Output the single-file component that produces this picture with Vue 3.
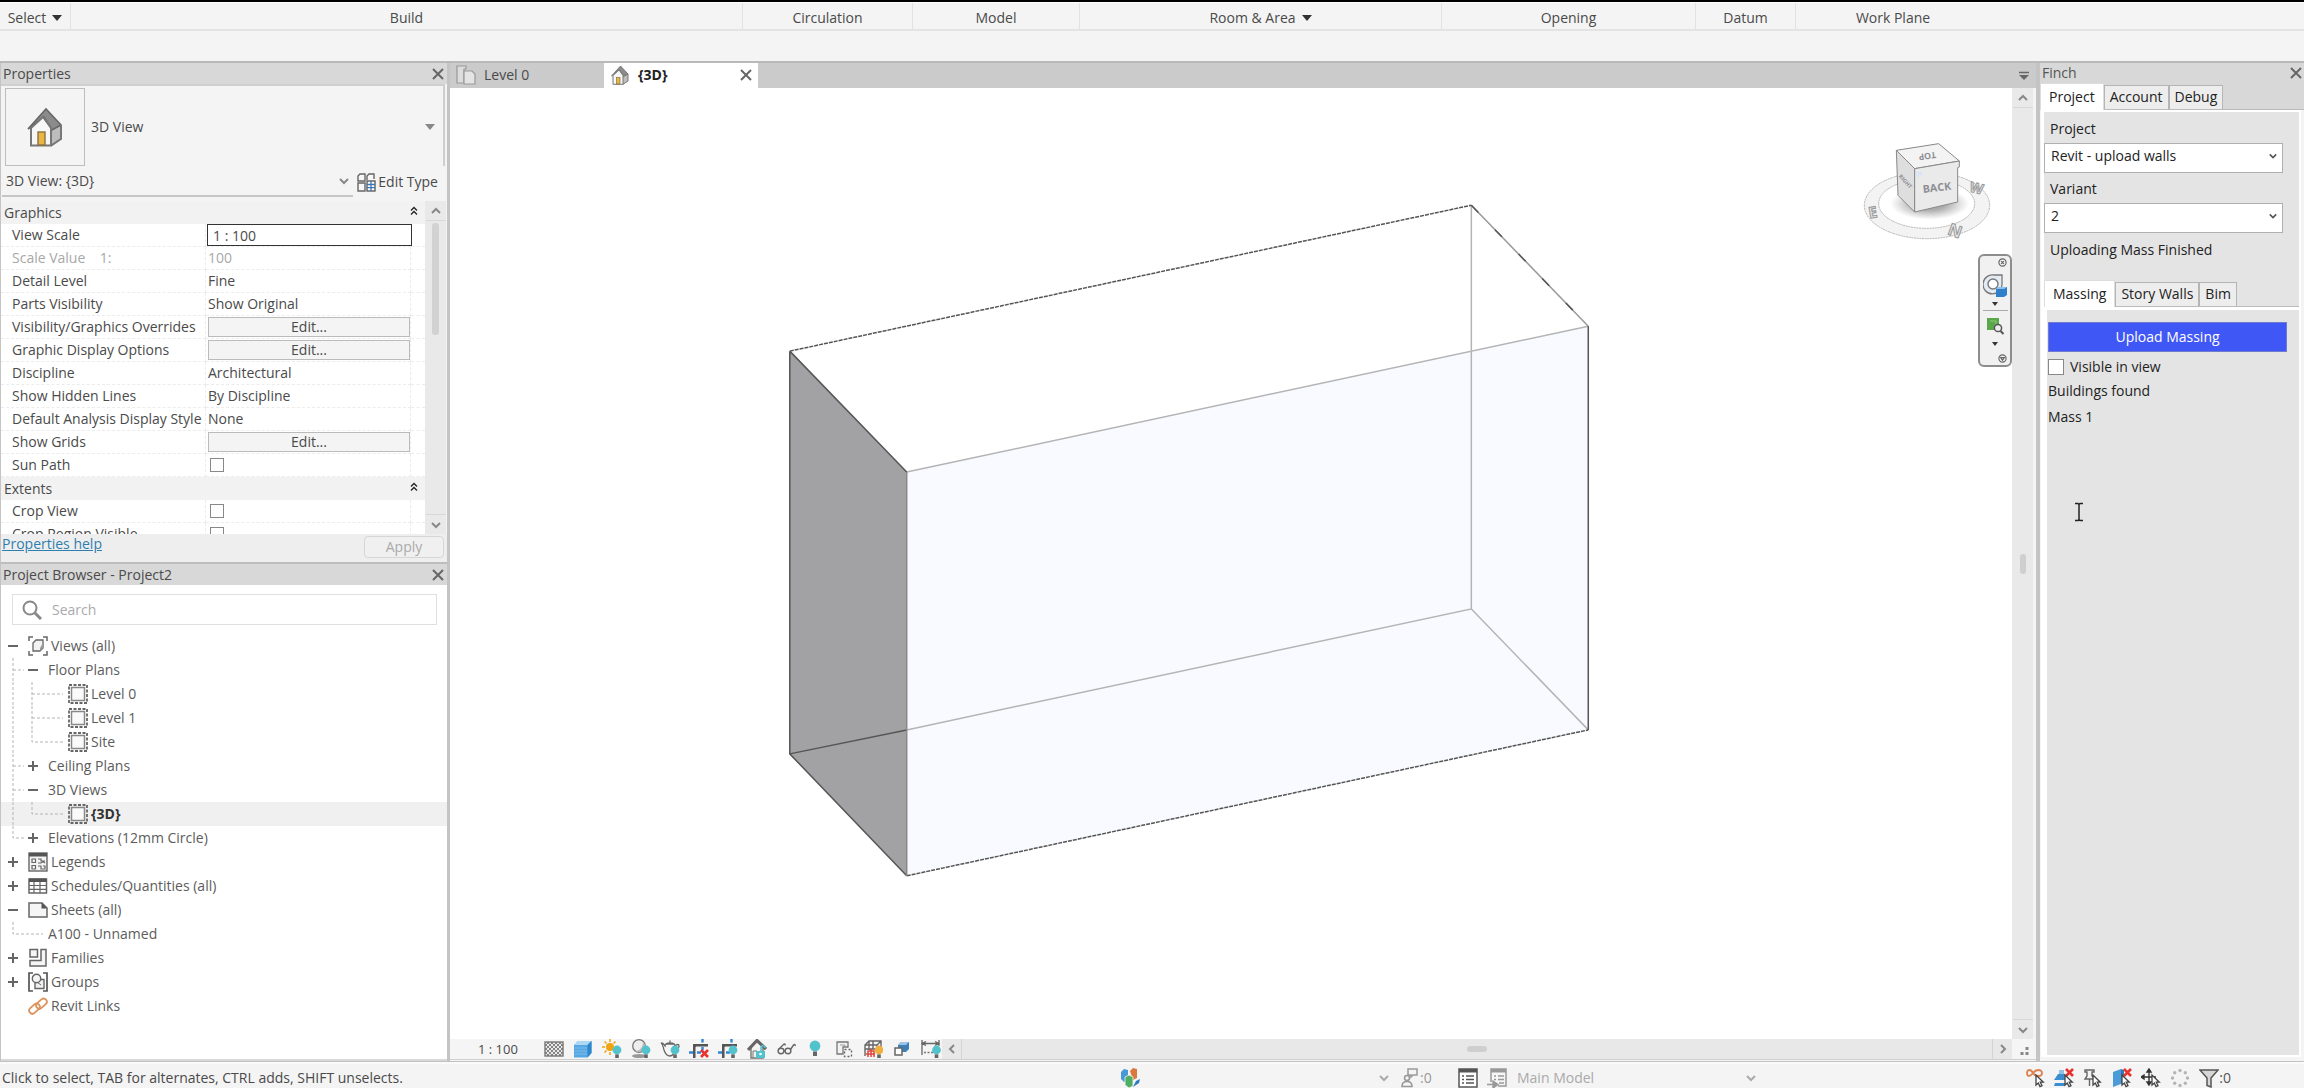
<script setup>
import { ref } from 'vue'

const ribbon = [
  { label: 'Select', w: 71, menu: true },
  { label: 'Build', w: 672 },
  { label: 'Circulation', w: 170 },
  { label: 'Model', w: 167 },
  { label: 'Room & Area', w: 362, menu: true },
  { label: 'Opening', w: 254 },
  { label: 'Datum', w: 100 },
  { label: 'Work Plane', w: 194 },
]

const groups = [
  {
    name: 'Graphics',
    rows: [
      { label: 'View Scale', value: '1 : 100', kind: 'input' },
      { label: 'Scale Value    1:', value: '100', kind: 'muted' },
      { label: 'Detail Level', value: 'Fine' },
      { label: 'Parts Visibility', value: 'Show Original' },
      { label: 'Visibility/Graphics Overrides', value: 'Edit...', kind: 'button' },
      { label: 'Graphic Display Options', value: 'Edit...', kind: 'button' },
      { label: 'Discipline', value: 'Architectural' },
      { label: 'Show Hidden Lines', value: 'By Discipline' },
      { label: 'Default Analysis Display Style', value: 'None' },
      { label: 'Show Grids', value: 'Edit...', kind: 'button' },
      { label: 'Sun Path', kind: 'check' },
    ],
  },
  {
    name: 'Extents',
    rows: [
      { label: 'Crop View', kind: 'check' },
      { label: 'Crop Region Visible', kind: 'check' },
    ],
  },
]

const leafMid = 'M12 0V24M31 0V24M31 12H62'
const tree = [
  { label: 'Views (all)', indent: 4, toggle: '-', icon: 'views' },
  { label: 'Floor Plans', indent: 24, toggle: '-', guides: 'M12 0V24M12 12H23' },
  { label: 'Level 0', indent: 67, icon: 'plan', guides: leafMid },
  { label: 'Level 1', indent: 67, icon: 'plan', guides: leafMid },
  { label: 'Site', indent: 67, icon: 'plan', guides: 'M12 0V24M31 0V12H62' },
  { label: 'Ceiling Plans', indent: 24, toggle: '+', guides: 'M12 0V24M12 12H23' },
  { label: '3D Views', indent: 24, toggle: '-', guides: 'M12 0V24M12 12H23' },
  { label: '{3D}', indent: 67, icon: 'plan', guides: 'M12 0V24M31 0V12H62', active: true },
  { label: 'Elevations (12mm Circle)', indent: 24, toggle: '+', guides: 'M12 0V12H23' },
  { label: 'Legends', indent: 4, toggle: '+', icon: 'legend' },
  { label: 'Schedules/Quantities (all)', indent: 4, toggle: '+', icon: 'schedule' },
  { label: 'Sheets (all)', indent: 4, toggle: '-', icon: 'sheet' },
  { label: 'A100 - Unnamed', indent: 40, guides: 'M12 0V12H42' },
  { label: 'Families', indent: 4, toggle: '+', icon: 'family' },
  { label: 'Groups', indent: 4, toggle: '+', icon: 'group' },
  { label: 'Revit Links', indent: 4, toggle: ' ', icon: 'link' },
]

const bulb = (c, x = 15, y = 11) =>
  `<circle cx="${x}" cy="${y}" r="4.4" fill="${c}"/><rect x="${x - 1.8}" y="${y + 4.4}" width="3.6" height="3.6" fill="#666"/>`
const teal = '#52c3cd'
const redX = (x, y, s = 7) =>
  `<path d="M${x} ${y}l${s} ${s}m0 ${-s}l${-s} ${s}" stroke="#e8322c" stroke-width="2.6" fill="none"/>`
const arrow = (x, y) =>
  `<path d="M${x} ${y}v10l2.300-2 1.700 3.600 2-1-1.700-3.400h3z" fill="#fff" stroke="#444" stroke-width="1.300"/>`
const cropCorner =
  '<path d="M5.500 19V6.500H19" fill="none" stroke="#555" stroke-width="3"/><path d="M7 19V8H19" fill="none" stroke="#eee" stroke-width="1"/><path d="M13.500 0v3.500M0 13.500h4M13.500 8v3.500M8 13.500h4" stroke="#2f86d6" stroke-width="2.400"/>'
const house =
  '<path d="M3 10.500 10 2l8 7v8l-6 2.500H3z" fill="#fff"/><path d="M13 10l5-2v8l-5 3.500z" fill="#bdbdbd"/><path d="M1.500 11 10.500 1l7.500 8-4.500 2.500L9.500 5z" fill="#8b8b8b" stroke="#666" stroke-width=".8"/><path d="M3 10.500V19.300h10V10.500L9 5z" fill="#f7f7f7" stroke="#777"/><path d="M13 19.300l5-3.300V9" fill="none" stroke="#777"/><rect x="6.500" y="12.500" width="3.500" height="6.500" fill="#e9b544" stroke="#8a7340" stroke-width=".7"/>'

const icons = {
  house,
  views:
    '<path d="M1 5V1h4M15 1h4v4M19 15v4h-4M5 19H1v-4" fill="none" stroke="#666" stroke-width="1.500"/><path d="M5 7l3-3h7v8l-3 3H5z" fill="#f2f2f2" stroke="#666" stroke-width="1.300"/><path d="M12 12l3-5v5l-3 3z" fill="#999"/>',
  plan:
    '<rect x="1" y="1" width="18" height="18" fill="none" stroke="#666" stroke-width="1.800" stroke-dasharray="3 1.500"/><rect x="3.500" y="3.500" width="13" height="13" fill="#fafafa" stroke="#888" stroke-width="1.500"/>',
  legend:
    '<rect x="1" y="1" width="18" height="18" fill="#f3f3f3" stroke="#666" stroke-width="1.400"/><rect x="1" y="1" width="18" height="3.500" fill="#555"/><path d="M4 7h3.500v3.500H4zM4 13.500h3.500V17H4zM10 7h3v2h4M10 11h3l2-1.500 2 1.500M10 14h3v3h4v-3h-2" fill="none" stroke="#666" stroke-width="1.200"/>',
  schedule:
    '<rect x="1" y="3" width="17.500" height="14" fill="#fff" stroke="#666" stroke-width="1.500"/><rect x="1" y="2.500" width="17.500" height="3.500" fill="#555"/><path d="M1 9.500h17.500M1 13.300h17.500M6 6v11M12 6v11" stroke="#666" stroke-width="1.200"/>',
  sheet:
    '<path d="M1 3h13l5 5v9H1z" fill="#f5f5f5" stroke="#666" stroke-width="1.500"/><path d="M13.500 2.500v6H19z" fill="#555"/>',
  family:
    '<path d="M2 1.500h7.500V9H2zM13 1.500h5V18H2v-5.500h11z" fill="#f5f5f5" stroke="#666" stroke-width="1.500"/>',
  group:
    '<path d="M5 1H1v18h4M15 1h4v18h-4" fill="none" stroke="#555" stroke-width="1.700"/><path d="M7 10v6.500h9V7.500h-3" fill="#f1f1f1" stroke="#666" stroke-width="1.400"/><circle cx="8.500" cy="6.500" r="4.200" fill="#f5f5f5" stroke="#666" stroke-width="1.400"/><path d="M9 10l4 3" stroke="#666"/>',
  link:
    '<g fill="none" stroke="#dd935c" stroke-width="1.800"><rect x="7.500" y="4.500" width="12" height="6.400" rx="3.200" transform="rotate(-42 13.500 7.700)"/><rect x=".5" y="9.500" width="12" height="6.400" rx="3.200" transform="rotate(-42 6.500 12.700)"/></g>',
  hatch:
    '<rect x="1" y="3" width="18" height="14" fill="#e9e9e9" stroke="#777" stroke-width="1.400"/><path d="M1 7l4-4M1 11l8-8M1 15l12-12M3 17L17 3M7 17L19 5M11 17l8-8M15 17l4-4M5 17L1 13M9 17L1 9M13 17L1 5M17 17L3 3M19 15L7 3M19 11l-8-8M19 7l-4-4" stroke="#777" stroke-width=".9"/>',
  shaded:
    '<path d="M1 6l4-4h13.500v12l-4 4.500H1z" fill="#56a7e2"/><path d="M1 6l4-4h13.500l-4 4z" fill="#aed7f4"/><path d="M14.500 6l4-4v12l-4 4.500z" fill="#2e86c9"/><path d="M2 9h12M2 12h12M2 15h12" stroke="#7dbdeb"/>',
  sun:
    '<circle cx="8" cy="8" r="4" fill="#f0a30e"/><path d="M8 0v3M8 13v3M0 8h3M13 8h3M2.500 2.500l2 2M2.500 13.500l2-2M13.500 2.500l-2 2" stroke="#f0a30e" stroke-width="1.500"/>' + bulb(teal),
  shadow:
    '<ellipse cx="8" cy="17" rx="7" ry="2" fill="#999"/><circle cx="8" cy="7" r="6.300" fill="#eee" stroke="#777" stroke-width="1.300"/><path d="M12 2.500a6.300 6.300 0 0 1-8 9.500c5 0 8-4 8-9.500z" fill="#bbb"/>' + bulb(teal),
  teapot:
    '<path d="M1 4c3 0 3 2 4 3 0-2 2-3 5-3s5 1 5 3c2-2 4-2 4 0s-2 3-4 3c-1 5-2 7-5 7s-5-3-6-6C3 8 3 5 1 4zM6 5h8M10 1.500v2" fill="#f5f5f5" stroke="#666" stroke-width="1.300"/>' + bulb(teal),
  cropOff: cropCorner + redX(12, 11),
  cropOn: cropCorner + bulb(teal),
  lock:
    '<path d="M4 9v10h12V9" fill="#f2f2f2" stroke="#777" stroke-width="1.400"/><path d="M1 11L10 1.500 19 10" fill="none" stroke="#666" stroke-width="3.200"/><path d="M6 19v-7h4v7" fill="none" stroke="#777"/><rect x="9" y="12" width="9" height="7" fill="#52c3cd"/><path d="M14 12V9c0-3 4-3 4 0" fill="none" stroke="#52c3cd" stroke-width="1.600"/><circle cx="13.500" cy="15" r="1.300" fill="#fff"/>',
  glasses:
    '<g fill="none" stroke="#666" stroke-width="1.400"><ellipse cx="5" cy="12" rx="2.900" ry="2.700"/><ellipse cx="12" cy="12" rx="2.900" ry="2.700"/><path d="M3 10L7.500 5.500c1-1 2-.5 1.500 1M14.500 10.500l3-4.500c1-1 2-.5 1.500 1M8 12h1"/></g>',
  bulb:
    '<circle cx="10" cy="7" r="5.400" fill="#52c3cd"/><rect x="8" y="12.500" width="4" height="4.500" fill="#666"/>',
  reveal:
    '<path d="M3 3h11v5h-5v7H3z" fill="#f2f2f2" stroke="#777" stroke-width="1.300"/><path d="M6 6h5v3" fill="none" stroke="#999"/><path d="M10.500 10.500h7v7h-7z" fill="none" stroke="#666" stroke-width="1.400" stroke-dasharray="2 2"/>',
  analytical:
    '<path d="M2 17V6l4-4h12v7M2 6h12v5M14 6l4-4M6 2v9M10 2v8M2 10h16" fill="none" stroke="#666" stroke-width="1.400"/><path d="M5 18v-6h6v6M3 15h9M8 10v8" fill="none" stroke="#e0453c" stroke-width="1.500"/>' + bulb('#f0b040', 16, 11),
  displace:
    '<path d="M6 6l3-3h8v7l-3 3H6z" fill="#3f7fb8"/><path d="M6 6l3-3h8l-3 3z" fill="#9cc4e4"/><path d="M3 9h7v7H3z" fill="#fff" stroke="#666" stroke-width="1.500"/>',
  constraint:
    '<path d="M1 1v15M18 1v6M1 4.500h17M5 2.500l-4 2 4 2M14 2.500l4 2-4 2" fill="none" stroke="#666" stroke-width="1.300"/><path d="M3 13.500h9" stroke="#777" stroke-width="1.400" stroke-dasharray="2 1.500"/>' + bulb(teal, 15.500, 11),
  selLink:
    '<path d="M2 5c0-4 4-4 6 0s9 4 9 0-6-4-9 0-6 4-6 0z" fill="none" stroke="#dd8350" stroke-width="1.800"/>' + arrow(11, 7),
  selUnder:
    '<path d="M0 12l4-6h7v6zM1 15h10v3H0z" fill="#3b8fcf"/><path d="M5 2h5v4H5z" fill="#8fc1e6"/>' + redX(12, 1) + arrow(11, 7),
  selPin:
    '<path d="M2 2h9v2H9v4l3 3H2l2-3V4H2zM6.500 11v7" fill="#f3f3f3" stroke="#666" stroke-width="1.400"/>' + arrow(10, 7),
  selFace:
    '<path d="M1 4l8-3v15l-8 3z" fill="#4a9bd8"/><path d="M9 1l3 1v12l-3 2z" fill="#2e7ab4"/>' + redX(12, 1) + arrow(10, 7),
  selDrag:
    '<path d="M8 2v14M1 9h14M8 1L6 4h4zM8 17l-2-3h4zM0 9l3-2v4z" fill="#333" stroke="#333" stroke-width="1.400"/>' + arrow(11, 7),
  busy:
    '<g fill="#b5b5b5"><circle cx="10" cy="2.500" r="1.700"/><circle cx="10" cy="17.500" r="1.700"/><circle cx="2.500" cy="10" r="1.700"/><circle cx="17.500" cy="10" r="1.700"/><circle cx="4.700" cy="4.700" r="1.700"/><circle cx="15.300" cy="4.700" r="1.700"/><circle cx="4.700" cy="15.300" r="1.700"/><circle cx="15.300" cy="15.300" r="1.700"/></g>',
  filter:
    '<path d="M1 2h18l-7 8v9l-4-1.500V10z" fill="#d6d6d6" stroke="#555" stroke-width="1.500"/>',
  sharing:
    '<path d="M1 4l3-3 4 1v11l-4 1-3-3z" fill="#4a98d6"/><path d="M10 3l3-3 4 1v9l-4 2z" fill="#d9793e"/><path d="M5 9l4-2 4 2v9l-4 2-4-3z" fill="#4fae62" stroke="#f4f4f4" stroke-width=".8"/><path d="M13 19l3-6 4-2-1 4-3 2z" fill="#2f78c4"/>',
  request:
    '<path d="M8 1h9v6h-4l-2 2V7H8z" fill="#f4f4f4" stroke="#999" stroke-width="1.500"/><circle cx="7" cy="10" r="2.500" fill="#f4f4f4" stroke="#999" stroke-width="1.500"/><path d="M2 18.500c0-4 2-5 5-5s5 1 5 5z" fill="#f4f4f4" stroke="#999" stroke-width="1.600"/>',
  options:
    '<rect x="1" y="1" width="18" height="18" fill="#fff" stroke="#555" stroke-width="1.500"/><rect x="1" y="1" width="18" height="3.500" fill="#555"/><path d="M4 8h2M8 8h8M4 11.500h2M8 11.500h8M4 15h2M8 15h8" stroke="#555" stroke-width="1.400"/>',
  optionPick:
    '<path d="M4 14V1h15v17h-8" fill="#f6f6f6" stroke="#999" stroke-width="1.500"/><rect x="4" y="1" width="15" height="3.500" fill="#999"/><path d="M7 8h2M11 8h6M7 11.500h2M11 11.500h6M12 15h5M0 16.500h6M6 13l5 3.500L6 20z" stroke="#999" stroke-width="1.400" fill="#999"/>',
  editType:
    '<path d="M2 9V4l2-2h5v7zM11 8V4l2-2h5v5" fill="#f7f7f7" stroke="#666" stroke-width="1.400"/><path d="M2 11h7v8H2z" fill="#f7f7f7" stroke="#666" stroke-width="1.400"/><rect x="11" y="9" width="8" height="10" fill="#fff" stroke="#555" stroke-width="1.300"/><path d="M11 12.500h8M11 15.700h8M15 9v10" stroke="#3b76b8" stroke-width="1.300"/>',
  pages:
    '<path d="M1 1h9v3h-2v14H1z" fill="#dcdcdc" stroke="#999" stroke-width="1.200"/><path d="M8 6h8l3 3v10H8z" fill="#e4e4e4" stroke="#999" stroke-width="1.200"/>',
}

const viewTools = ['hatch', 'shaded', 'sun', 'shadow', 'teapot', 'cropOff', 'cropOn', 'lock', 'glasses', 'bulb', 'reveal', 'analytical', 'displace', 'constraint']
const selTools = ['selLink', 'selUnder', 'selPin', 'selFace', 'selDrag', 'busy']

const project = ref('Revit - upload walls')
const variant = ref('2')
</script>

<template>
  <div class="app">
    <header class="ribbon">
      <div v-for="r in ribbon" :key="r.label" class="panel-label" :style="{ flexBasis: r.w + 'px' }">
        <button v-if="r.menu" type="button" class="plain">{{ r.label }} <span class="caret"></span></button>
        <span v-else>{{ r.label }}</span>
      </div>
    </header>
    <div class="options-bar"></div>

    <main class="work">
      <aside class="left">
        <section class="dock">
          <div class="titlebar">
            <h2>Properties</h2>
            <button type="button" class="close" aria-label="Close properties"><svg viewBox="0 0 12 12"><path d="M1 1l10 10M11 1L1 11" /></svg></button>
          </div>
          <div class="type-picker">
            <div class="thumb"><svg viewBox="0 0 20 20" v-html="icons.house"></svg></div>
            <span class="type-name">3D View</span>
            <span class="caret grey"></span>
          </div>
          <div class="instance">
            <button type="button" class="instance-select">3D View: {3D}<svg class="chev" viewBox="0 0 10 10"><path d="M1 3l4 4 4-4" /></svg></button>
            <button type="button" class="plain edit-type"><svg class="ico" viewBox="0 0 20 20" v-html="icons.editType"></svg>Edit Type</button>
          </div>
          <div class="grid-wrap">
            <div class="grid-clip">
              <table>
                <colgroup><col class="c-name" /><col /><col class="c-end" /></colgroup>
                <tbody v-for="g in groups" :key="g.name">
                  <tr class="group">
                    <th colspan="2" scope="colgroup">{{ g.name }}</th>
                    <td><svg class="fold" viewBox="0 0 8 10"><path d="M1 4.500l3-3 3 3M1 8.500l3-3 3 3" /></svg></td>
                  </tr>
                  <tr v-for="(r, i) in g.rows" :key="r.label" :class="{ muted: r.kind === 'muted' }">
                    <th scope="row"><label :for="g.name + i">{{ r.label }}</label></th>
                    <td class="val">
                      <input v-if="r.kind === 'input'" :id="g.name + i" type="text" :value="r.value" />
                      <button v-else-if="r.kind === 'button'" :id="g.name + i" type="button">{{ r.value }}</button>
                      <input v-else-if="r.kind === 'check'" :id="g.name + i" type="checkbox" />
                      <output v-else :id="g.name + i">{{ r.value }}</output>
                    </td>
                    <td></td>
                  </tr>
                </tbody>
              </table>
            </div>
            <div class="vscroll">
              <span class="sb"><svg class="chev" viewBox="0 0 10 10"><path d="M1 7l4-4 4 4" /></svg></span>
              <span class="prop-thumb"></span>
              <span class="sb end"><svg class="chev" viewBox="0 0 10 10"><path d="M1 3l4 4 4-4" /></svg></span>
            </div>
          </div>
          <div class="dock-foot">
            <a href="#help">Properties help</a>
            <button type="button" disabled>Apply</button>
          </div>
        </section>

        <section class="dock browser">
          <div class="titlebar">
            <h2>Project Browser - Project2</h2>
            <button type="button" class="close" aria-label="Close browser"><svg viewBox="0 0 12 12"><path d="M1 1l10 10M11 1L1 11" /></svg></button>
          </div>
          <label class="search">
            <svg viewBox="0 0 20 20"><circle cx="8" cy="8" r="6.500" /><path d="M13 13l6 6" class="handle" /></svg>
            <input type="search" placeholder="Search" aria-label="Search" />
          </label>
          <ul class="tree">
            <li v-for="t in tree" :key="t.label" :class="{ active: t.active }">
              <svg class="guides" :width="t.indent" height="24"><path v-if="t.guides" :d="t.guides" /></svg>
              <svg v-if="t.toggle" class="toggle" viewBox="0 0 16 16">
                <path v-if="t.toggle !== ' '" d="M3 8h10" />
                <path v-if="t.toggle === '+'" d="M8 3v10" />
              </svg>
              <svg v-if="t.icon" class="ico" :class="{ gap: t.toggle }" viewBox="0 0 20 20" v-html="icons[t.icon]"></svg>
              <span :class="t.icon ? 'after-ico' : 'after-toggle'">{{ t.label }}</span>
            </li>
          </ul>
        </section>
      </aside>

      <section class="center">
        <div class="tabs">
          <button type="button" class="tab"><svg class="ico" viewBox="0 0 20 20" v-html="icons.pages"></svg>Level 0</button>
          <div class="tab current">
            <svg class="ico" viewBox="0 0 20 20" v-html="icons.house"></svg><b>{3D}</b>
            <button type="button" class="close" aria-label="Close view"><svg viewBox="0 0 12 12"><path d="M1 1l10 10M11 1L1 11" /></svg></button>
          </div>
          <svg class="tab-menu" viewBox="0 0 12 10"><path d="M1 1.500h10" stroke="#666" stroke-width="1.500" /><path d="M1 4h10L6 9z" fill="#666" /></svg>
        </div>
        <div class="stage">
          <div class="canvas">
            <svg class="model" viewBox="0 0 1563 951">
              <path d="M340 263L457 384V788L340 666z" fill="#a2a2a4" />
              <path d="M457 384L1139 238V642L457 788z" fill="#f8faff" />
              <g fill="none" stroke="#b4b4b4" stroke-width="1.500">
                <path d="M1022 117V521L457 642M1022 521L1139 642M457 384L1139 238" />
                <path d="M1022 117L1139 238" stroke="#999" />
              </g>
              <g fill="none" stroke="#555" stroke-width="1.500">
                <path d="M340 263L1022 117M457 788L1139 642" stroke-dasharray="4 1" />
                <path d="M340 263L457 384M340 263V666L457 788M340 666L457 642M1139 238V642" />
                <path d="M1022 117L1139 238" stroke-dasharray="10 24" />
                <path d="M457 384V788" stroke="#888" />
              </g>
            </svg>
            <svg class="cube" viewBox="170 230 420 324">
              <defs>
                <radialGradient id="cubeShade"><stop offset="0.400" stop-color="#888" stop-opacity=".7" /><stop offset="1" stop-color="#999" stop-opacity="0" /></radialGradient>
              </defs>
              <path fill-rule="evenodd" d="M192 435a188 100 0 1 0 376 0a188 100 0 1 0-376 0zM235 430a144 74 0 1 0 288 0a144 74 0 1 0-288 0z" fill="#f3f3f3" stroke="#aaa" stroke-width="2.500" stroke-dasharray="6 2" />
              <ellipse cx="388" cy="430" rx="118" ry="48" fill="url(#cubeShade)" />
              <path d="M288 270L415 250L477 302L343 325z" fill="#f3f3f3" stroke="#888" stroke-width="3" />
              <path d="M288 270L343 325V455L293 405z" fill="#dedede" stroke="#888" stroke-width="3" />
              <path d="M343 325L477 302V320L472 322V425L343 455z" fill="#eaeaea" stroke="#888" stroke-width="3" />
              <path d="M346 336l20-3v14l-20 3z" fill="#dde5f2" />
              <g font-family="Open Sans, sans-serif" font-weight="700" fill="#8f8f95" text-anchor="middle">
                <text transform="translate(411 393) rotate(-7)" font-size="32">BACK</text>
                <text transform="translate(380 278) rotate(172)" font-size="26">TOP</text>
                <text transform="translate(311 367) rotate(48)" font-size="16">RIGHT</text>
                <text transform="translate(220 472) rotate(-10)" font-size="46" fill="#e6e6e6" stroke="#999" stroke-width="3">E</text>
                <text transform="translate(458 528) rotate(20)" font-size="50" fill="#e6e6e6" stroke="#999" stroke-width="3">N</text>
                <text transform="translate(525 398) rotate(14)" font-size="42" fill="#e6e6e6" stroke="#999" stroke-width="3">W</text>
              </g>
            </svg>
            <div class="navbar">
              <svg class="nav-dot" viewBox="0 0 10 10"><circle cx="5" cy="5" r="4" /><path d="M3.500 3.500l3 3M6.500 3.500l-3 3" /></svg>
              <svg class="nav-ico" viewBox="0 0 24 24"><path d="M11 1h8v9a9.500 9.500 0 1 1-8-9z" fill="#e3ebf5" stroke="#777" stroke-width="1.300" /><circle cx="10" cy="10" r="5" fill="#fff" stroke="#777" stroke-width="1.400" /><path d="M13 15l3-2h8v8l-3 2h-8z" fill="#2f7fca" /><path d="M13 15l3-2h8l-3 2z" fill="#8fc0ea" /></svg>
              <span class="caret small"></span>
              <hr />
              <svg class="nav-ico" viewBox="0 0 24 24"><path d="M4 4h12v12H4z" fill="#5aa84b" /><path d="M7 7h6v6" fill="none" stroke="#8fcb7f" /><circle cx="15" cy="14" r="3.600" fill="#eee" stroke="#555" stroke-width="1.500" /><path d="M17.500 17l3 3" stroke="#555" stroke-width="2" /></svg>
              <span class="caret small"></span>
              <svg class="nav-dot bottom" viewBox="0 0 10 10"><circle cx="5" cy="5" r="4" /><path d="M3 4h4L5 7z" /></svg>
            </div>
          </div>
          <div class="vscroll">
            <span class="sb"><svg class="chev" viewBox="0 0 10 10"><path d="M1 7l4-4 4 4" /></svg></span>
            <span class="mini-thumb"></span>
            <span class="sb end"><svg class="chev" viewBox="0 0 10 10"><path d="M1 3l4 4 4-4" /></svg></span>
          </div>
        </div>
        <div class="view-bar">
          <span class="scale">1 : 100</span>
          <div class="view-tools">
            <button v-for="v in viewTools" :key="v" type="button" class="plain" :aria-label="v"><svg class="ico" viewBox="0 0 20 20" v-html="icons[v]"></svg></button>
          </div>
          <div class="hscroll">
            <span class="sb"><svg class="chev" viewBox="0 0 10 10"><path d="M7 1L3 5l4 4" /></svg></span>
            <span class="track"><span class="h-thumb"></span></span>
            <span class="sb"><svg class="chev" viewBox="0 0 10 10"><path d="M3 1l4 4-4 4" /></svg></span>
          </div>
          <svg class="grip" viewBox="0 0 20 20"><path d="M13 8h3v3h-3zM13 13h3v3h-3zM8 13h3v3H8z" fill="#888" /></svg>
        </div>
      </section>

      <aside class="finch">
        <div class="titlebar">
          <h2>Finch</h2>
          <button type="button" class="close" aria-label="Close Finch"><svg viewBox="0 0 12 12"><path d="M1 1l10 10M11 1L1 11" /></svg></button>
        </div>
        <nav class="wtabs outer">
          <button type="button" class="on">Project</button><button type="button">Account</button><button type="button">Debug</button>
        </nav>
        <div class="pane">
          <label for="project">Project</label>
          <div class="combo">
            <select id="project" v-model="project"><option>Revit - upload walls</option></select>
            <svg class="chev" viewBox="0 0 10 10"><path d="M1 3l4 4 4-4" /></svg>
          </div>
          <label for="variant">Variant</label>
          <div class="combo">
            <select id="variant" v-model="variant"><option>2</option></select>
            <svg class="chev" viewBox="0 0 10 10"><path d="M1 3l4 4 4-4" /></svg>
          </div>
          <p class="status-text">Uploading Mass Finished</p>
          <nav class="wtabs">
            <button type="button" class="on">Massing</button><button type="button">Story Walls</button><button type="button">Bim</button>
          </nav>
          <div class="inner">
            <button type="button" class="upload">Upload Massing</button>
            <label class="visible"><input type="checkbox" /> Visible in view</label>
            <p>Buildings found</p>
            <p>Mass 1</p>
            <svg class="ibeam" viewBox="0 0 10 20"><path d="M1 1.500h3l1 1 1-1h3M5 2.500v15M1 18.500h3l1-1 1 1h3" fill="none" stroke="#222" stroke-width="1.500" /></svg>
          </div>
        </div>
      </aside>
    </main>

    <footer class="statusbar">
      <span class="hint">Click to select, TAB for alternates, CTRL adds, SHIFT unselects.</span>
      <div class="workset">
        <svg class="ico" viewBox="0 0 20 20" v-html="icons.sharing"></svg>
        <svg class="chev" viewBox="0 0 10 10"><path d="M1 3l4 4 4-4" /></svg>
      </div>
      <div class="requests"><svg class="ico" viewBox="0 0 20 20" v-html="icons.request"></svg><span>:0</span></div>
      <svg class="ico" viewBox="0 0 20 20" v-html="icons.options"></svg>
      <svg class="ico pick" viewBox="0 0 20 20" v-html="icons.optionPick"></svg>
      <div class="model-pick"><span>Main Model</span><svg class="chev" viewBox="0 0 10 10"><path d="M1 3l4 4 4-4" /></svg></div>
      <div class="sel-tools">
        <button v-for="s in selTools" :key="s" type="button" class="plain" :aria-label="s"><svg class="ico" viewBox="0 0 20 20" v-html="icons[s]"></svg></button>
        <span class="count"><svg class="ico" viewBox="0 0 20 20" v-html="icons.filter"></svg>:0</span>
      </div>
    </footer>
  </div>
</template>

<style>
body { margin: 0; overflow: hidden; }
</style>

<style scoped>
.app {
  display: flex;
  flex-direction: column;
  height: 100vh;
  box-sizing: border-box;
  border-top: 2px solid #000;
  background: #f4f4f4;
  font: 14px/20px "Open Sans", "Noto Sans", sans-serif;
  color: #4a4a4a;
}
.app *, .app *::before { box-sizing: border-box; }
button, input, select { font: inherit; color: inherit; }
h2, p, ul { margin: 0; padding: 0; font-size: inherit; font-weight: 400; }
svg { display: block; flex: none; }
.ico { width: 20px; height: 20px; }
.plain { display: flex; align-items: center; padding: 0; border: 0; background: none; }
.caret { border: 5px solid transparent; border-top: 6px solid #333; border-bottom: 0; margin-left: 6px; }
.caret.grey { border-top-color: #888; margin: 0 4px 0 auto; }
.caret.small { border-width: 4px 3px 0; margin: 0; }
.chev { width: 10px; height: 10px; fill: none; stroke: #888; stroke-width: 2; }

.ribbon { display: flex; height: 29px; border-top: 1px solid #fff; border-bottom: 2px solid #e3e3e3; }
.panel-label { display: flex; align-items: center; justify-content: center; flex: 0 1 auto; padding-top: 4px; border-right: 1px solid #e2e2e2; }
.panel-label:last-child { border-right: 0; }
.options-bar { flex: none; height: 32px; border-bottom: 2px solid #b9b9b9; }

.work { display: flex; flex: 1; min-height: 0; border-bottom: 1px solid #c2c2c2; }
.left { display: flex; flex-direction: column; flex: none; width: 450px; border-left: 1px solid #c4c4c4; border-right: 3px solid #c4c4c4; }
.dock { display: flex; flex-direction: column; flex: 501 1 0; min-height: 0; }
.titlebar { display: flex; align-items: center; justify-content: space-between; flex: none; height: 21px; padding: 0 3px 0 2px; background: #d8d8d8; }
.close { display: flex; padding: 0; border: 0; background: none; }
.close svg { width: 12px; height: 12px; stroke: #666; stroke-width: 2; }

.type-picker { display: flex; align-items: center; flex: none; height: 82px; margin-right: 2px; padding: 4px 4px 2px; border-top: 2px solid #cfcfcf; border-right: 2px solid #cfcfcf; }
.thumb { display: grid; place-items: center; width: 80px; height: 78px; border: 1px solid #bdbdbd; }
.thumb svg { width: 40px; height: 40px; }
.type-name { margin-left: 6px; }
.instance { display: flex; flex: none; height: 35px; padding: 0 9px 4px 1px; }
.instance-select { display: flex; align-items: center; justify-content: space-between; flex: 1; padding: 0 4px 0 4px; border: 0; border-bottom: 2px solid #c6c6c6; background: none; }
.edit-type { margin-left: 3px; gap: 2px; }
.grid-wrap { display: flex; flex: 1; min-height: 0; padding-right: 1px; }
.grid-clip { flex: 1; overflow: hidden; background: #fff; }
table { width: 100%; table-layout: fixed; border-collapse: separate; border-spacing: 0; }
.c-name { width: 205px; }
.c-end { width: 14px; }
tr { height: 23px; }
th, td { height: 23px; padding: 0; font-weight: 400; text-align: left; white-space: pre; line-height: 20px; border-bottom: 1px dashed #ececec; }
th[scope="row"] { padding-left: 11px; border-right: 1px dashed #ececec; }
.val { padding-left: 2px; border-right: 1px dashed #ececec; }
.group th, .group td { background: #f2f2f2; border: 0; padding-left: 3px; }
.fold { width: 8px; height: 10px; margin: 0 0 4px -4px; fill: none; stroke: #222; stroke-width: 1.3; }
.muted { color: #a8a8a8; }
.val input[type="text"] { display: block; width: 205px; height: 22px; margin-left: -1px; padding: 0 5px; border: 1px solid #333; background: #fff; outline: 0; }
.val button { display: block; width: 202px; height: 20px; padding: 0; border: 1px solid #bbb; background: #f4f4f4; line-height: 16px; }
input[type="checkbox"] { display: block; flex: none; appearance: none; width: 14px; height: 14px; margin: 0 2px; border: 1px solid #888; background: #fff; }
.vscroll { display: flex; flex-direction: column; align-items: center; flex: none; width: 21px; background: #e9e9e9; }
.sb { display: grid; place-items: center; flex: none; width: 20px; height: 20px; border-bottom: 1px solid #d8d8d8; }
.sb.end { margin-top: auto; border-bottom: 0; border-top: 1px solid #d8d8d8; }
.prop-thumb { width: 7px; height: 112px; margin-top: 2px; border-radius: 3px; background: #d2d2d2; }
.dock-foot { display: flex; justify-content: space-between; flex: none; height: 30px; padding: 0 3px 0 1px; background: #eee; border-bottom: 2px solid #bdbdbd; }
.dock-foot a { color: #2f7eb0; line-height: 20px; }
.dock-foot button { width: 80px; height: 22px; margin-top: 2px; padding: 0; border: 1px solid #d6d6d6; border-radius: 4px; background: #f0f0f0; color: #aaa; line-height: 20px; }

.browser { flex-grow: 495; background: #fff; border-bottom: 2px solid #d8d8d8; }
.search { display: flex; align-items: center; flex: none; height: 31px; margin: 9px 10px 9px 11px; padding-left: 9px; border: 1px solid #e0e0e0; }
.search svg { width: 20px; height: 20px; fill: none; stroke: #888; stroke-width: 2; }
.search .handle { stroke-width: 3; }
.search input { flex: 1; padding: 0; margin-left: 10px; border: 0; outline: 0; background: none; }
.search input::placeholder { color: #aaa; opacity: 1; }
.tree { list-style: none; color: #5c5c5c; }
.tree li { display: flex; align-items: center; height: 24px; }
.tree .active { background: #f0f0f0; color: #333; font-weight: 700; }
.guides path { fill: none; stroke: #b5b5b5; stroke-width: 1; stroke-dasharray: 3 2; }
.guides { overflow: visible; }
.toggle { width: 16px; height: 16px; stroke: #666; stroke-width: 2; }
.ico.gap { margin-left: 7px; }
.after-ico { margin-left: 3px; }
.after-toggle { margin-left: 7px; }

.center { display: flex; flex-direction: column; flex: 1; min-width: 0; padding-bottom: 1px; }
.tabs { display: flex; flex: none; height: 25px; background: #cbcbcb; }
.tab { display: flex; align-items: center; width: 154px; padding: 0 6px 1px; border: 0; background: none; gap: 8px; }
.tab.current { background: #fff; color: #222; }
.tab .close { margin-left: auto; }
.tab-menu { width: 12px; height: 10px; margin: 8px 6px 0 auto; }
.stage { display: flex; flex: 1; min-height: 0; padding-right: 3px; }
.canvas { position: relative; flex: 1; min-width: 0; background: #fff; }
.model { position: absolute; width: 100%; height: 100%; }
.cube { position: absolute; top: 49px; right: 15px; width: 140px; height: 108px; }
.navbar { position: absolute; top: 166px; right: 0; display: flex; flex-direction: column; align-items: center; width: 34px; height: 113px; padding: 2px 3px; border: 2px solid #8d8d8d; border-radius: 6px; background: #f1f1f1; }
.nav-dot { align-self: flex-end; width: 9px; height: 9px; fill: none; stroke: #666; stroke-width: 1.3; }
.nav-dot.bottom { margin-top: auto; }
.nav-ico { width: 24px; height: 24px; margin: 7px 0 4px; }
.navbar hr { width: 25px; margin: 4px 0 0; border: 0; border-top: 1px solid #aaa; }
.navbar hr + .nav-ico { margin: 3px 0 4px; }
.mini-thumb { width: 6px; height: 20px; margin-top: auto; border-radius: 3px; background: #cfcfcf; }
.view-bar { display: flex; align-items: center; flex: none; height: 21px; padding-right: 3px; border-bottom: 1px solid #cfcfcf; background: #f5f5f5; }
.scale { width: 94px; padding-left: 28px; font-size: 13px; }
.view-tools { display: flex; gap: 9px; }
.hscroll { display: flex; align-items: center; flex: 1; margin-left: 1px; background: #e8e8e8; }
.hscroll .sb { border: 0; border-right: 1px solid #d4d4d4; }
.hscroll .sb:last-child { border-right: 0; border-left: 1px solid #d4d4d4; }
.track { flex: 1; display: flex; justify-content: center; }
.h-thumb { width: 20px; height: 6px; border-radius: 3px; background: #cfcfcf; }
.grip { width: 21px; height: 20px; }

.finch { display: flex; flex-direction: column; flex: none; width: 268px; padding-bottom: 4px; border-left: 4px solid #c4c4c4; background: #f4f4f4; color: #222; }
.finch .titlebar { height: 20px; color: #555; padding-right: 2px; }
.wtabs { display: flex; align-items: flex-end; flex: none; height: 27px; border-bottom: 1px solid #bbb; line-height: 20px; }
.wtabs.outer { background: #d8d8d8; }
.wtabs button { height: 24px; padding: 0 5px 1px; border: 1px solid #b5b5b5; border-bottom: 0; background: #ededed; white-space: nowrap; }
.wtabs .on { height: 27px; padding: 0 8px 1px; margin-bottom: -1px; background: #fff; border-color: #ddd; }
.pane { display: flex; flex-direction: column; flex: 1; margin: 0 3px 0 1px; padding-top: 7px; border: 3px solid #fff; border-width: 2px 2px 2px 3px; background: #e4e4e4; }
.pane > label { padding-left: 6px; }
.combo { position: relative; display: flex; margin: 4px 16px 6px 0; }
.combo select { flex: 1; height: 30px; padding: 0 6px 4px; border: 1px solid #b0b0b0; appearance: none; background: #fff; border-radius: 0; }
.combo .chev { position: absolute; right: 6px; top: 8px; width: 8px; stroke: #555; }
.status-text { margin: 1px 0 20px; padding-left: 6px; }
.inner { display: flex; flex-direction: column; align-items: flex-start; flex: 1; padding: 12px 12px 0 1px; border-left: 3px solid #fff; border-top: 3px solid #fff; }
.upload { align-self: stretch; height: 30px; padding: 0; border: 1px solid #6f7bd0; background: #3f57f5; color: #fff; }
.visible { display: flex; align-items: center; height: 30px; gap: 6px; }
.visible input { width: 16px; height: 16px; margin: 0; }
.inner p { height: 26px; line-height: 18px; }
.ibeam { width: 10px; height: 20px; margin: 68px 0 0 26px; }

.statusbar { display: flex; align-items: center; flex: none; height: 26px; border-top: 2px solid #fafafa; padding-top: 4px; }
.hint { width: 1120px; padding-left: 2px; white-space: nowrap; }
.workset { display: flex; align-items: center; justify-content: space-between; width: 269px; }
.statusbar .chev { stroke: #aaa; }
.requests { display: flex; align-items: center; width: 69px; padding-left: 11px; color: #999; }
.pick { margin-left: 9px; }
.model-pick { display: flex; align-items: center; justify-content: space-between; width: 249px; padding-left: 10px; color: #aaa; }
.sel-tools { display: flex; align-items: center; gap: 9px; margin-left: auto; padding-right: 73px; }
.count { display: flex; align-items: center; color: #555; }
</style>
